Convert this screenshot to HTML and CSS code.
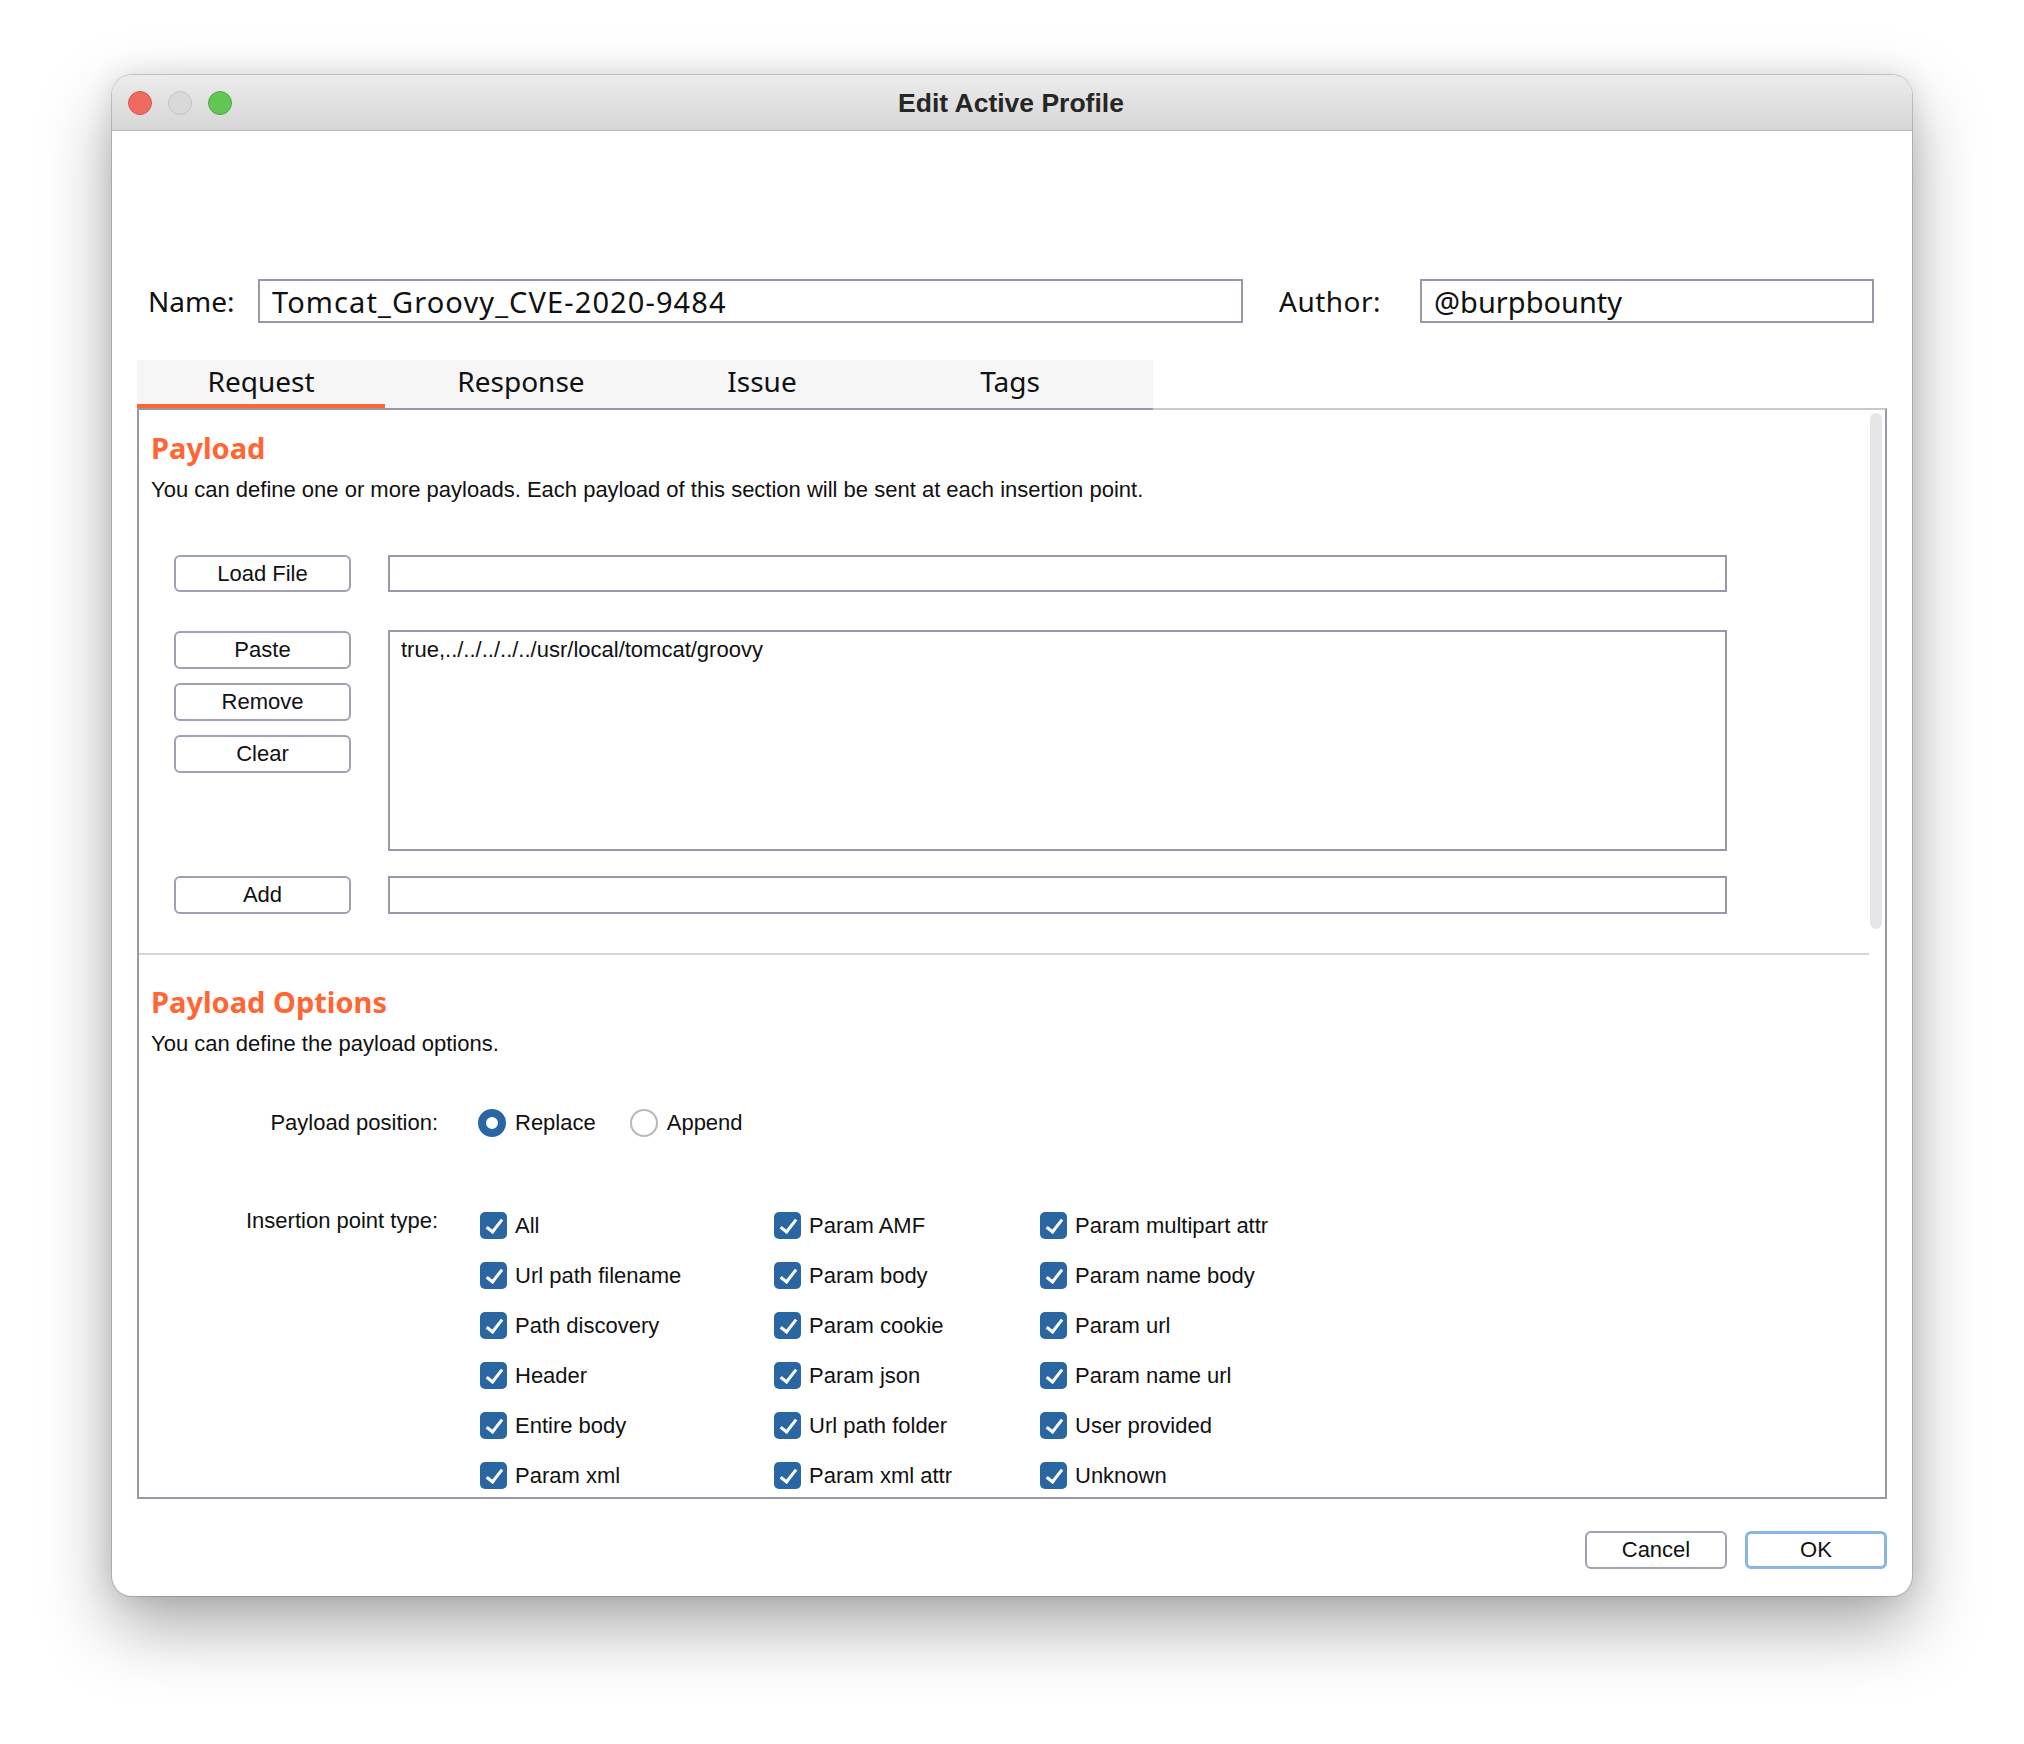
FILE: index.html
```html
<!DOCTYPE html>
<html>
<head>
<meta charset="utf-8">
<title>Edit Active Profile</title>
<link rel="stylesheet" href="styles.css">
</head>
<body>
<div class="window">
  <div class="titlebar">
    <div class="lights">
      <span class="light red"></span>
      <span class="light grey"></span>
      <span class="light green"></span>
    </div>
    <div class="title">Edit Active Profile</div>
    <div></div>
  </div>
  <div class="content">
    <div class="meta-row">
      <span class="meta-label name-label">Name:</span>
      <div class="field name-field">Tomcat_Groovy_CVE-2020-9484</div>
      <span class="meta-label author-label">Author:</span>
      <div class="field author-field">@burpbounty</div>
    </div>

    <div class="tabs">
      <div class="tab active">Request</div>
      <div class="tab">Response</div>
      <div class="tab">Issue</div>
      <div class="tab">Tags</div>
    </div>

    <div class="panel">
      <div class="scroll-thumb"></div>

      <section class="section">
        <h2 class="section-title">Payload</h2>
        <p class="section-desc">You can define one or more payloads. Each payload of this section will be sent at each insertion point.</p>

        <div class="prow row-file">
          <div class="btn">Load File</div>
          <div class="input"></div>
        </div>
        <div class="prow row-list">
          <div class="btn-stack">
            <div class="btn">Paste</div>
            <div class="btn">Remove</div>
            <div class="btn">Clear</div>
          </div>
          <div class="input list">true,../../../../../usr/local/tomcat/groovy</div>
        </div>
        <div class="prow row-add">
          <div class="btn btn-add">Add</div>
          <div class="input input-add"></div>
        </div>
      </section>

      <div class="divider"></div>

      <section class="section">
        <h2 class="section-title options-title">Payload Options</h2>
        <p class="section-desc">You can define the payload options.</p>

        <div class="opt-row pos-row">
          <div class="opt-label">Payload position:</div>
          <div class="radios">
            <span class="radio checked"></span><span class="radio-text">Replace</span>
            <span class="radio"></span><span class="radio-text">Append</span>
          </div>
        </div>

        <div class="opt-row ins-row">
          <div class="opt-label ins-label">Insertion point type:</div>
          <div class="checks">
            <div class="chk"><span class="box"></span>All</div>
            <div class="chk"><span class="box"></span>Param AMF</div>
            <div class="chk"><span class="box"></span>Param multipart attr</div>
            <div class="chk"><span class="box"></span>Url path filename</div>
            <div class="chk"><span class="box"></span>Param body</div>
            <div class="chk"><span class="box"></span>Param name body</div>
            <div class="chk"><span class="box"></span>Path discovery</div>
            <div class="chk"><span class="box"></span>Param cookie</div>
            <div class="chk"><span class="box"></span>Param url</div>
            <div class="chk"><span class="box"></span>Header</div>
            <div class="chk"><span class="box"></span>Param json</div>
            <div class="chk"><span class="box"></span>Param name url</div>
            <div class="chk"><span class="box"></span>Entire body</div>
            <div class="chk"><span class="box"></span>Url path folder</div>
            <div class="chk"><span class="box"></span>User provided</div>
            <div class="chk"><span class="box"></span>Param xml</div>
            <div class="chk"><span class="box"></span>Param xml attr</div>
            <div class="chk"><span class="box"></span>Unknown</div>
          </div>
        </div>
      </section>
    </div>

    <div class="footer">
      <div class="btn btn-footer">Cancel</div>
      <div class="btn btn-footer btn-default">OK</div>
    </div>
  </div>
</div>
</body>
</html>
```
FILE: styles.css
```css
* { box-sizing: border-box; }

html, body {
  margin: 0;
  padding: 0;
}

body {
  width: 2024px;
  height: 1744px;
  overflow: hidden;
  background: #ffffff;
  font-family: "Liberation Sans", Arial, sans-serif;
  color: #111111;
}

.window {
  margin: 75px 0 0 112px;
  width: 1800px;
  height: 1521px;
  background: #ffffff;
  border-radius: 20px;
  overflow: hidden;
  box-shadow: 0 0 0 1px rgba(0, 0, 0, 0.16),
              0 30px 70px rgba(0, 0, 0, 0.34),
              0 0 28px rgba(0, 0, 0, 0.10);
}

/* ---------- title bar ---------- */
.titlebar {
  height: 56px;
  display: grid;
  grid-template-columns: 1fr auto 1fr;
  align-items: center;
  background: linear-gradient(#ececec, #d6d6d6);
  border-bottom: 1px solid #b6b6b6;
}

.lights {
  display: flex;
  gap: 16px;
  padding-left: 16px;
}

.light {
  width: 24px;
  height: 24px;
  border-radius: 50%;
}

.red { background: #ee6b60; border: 1px solid #d4584d; }
.grey { background: #d9d9d9; border: 1px solid #c2c2c2; }
.green { background: #62c655; border: 1px solid #4fab43; }

.title {
  padding-top: 2px;
  padding-right: 2px;
  font-family: "Liberation Sans", Arial, sans-serif;
  font-weight: bold;
  font-size: 26.5px;
  color: #262626;
}

/* ---------- content ---------- */
.content {
  padding: 148px 25px 0 25px;
}

.meta-row {
  display: flex;
  align-items: center;
  height: 44px;
  padding-left: 11px;
  font-family: "Noto Sans", "Open Sans", sans-serif;
  font-size: 28px;
  color: #111;
}

.name-label { width: 110px; }
.author-label { margin-left: 36px; width: 141px; letter-spacing: 0.5px; }

.field {
  height: 44px;
  border: 2px solid #9a97a9;
  padding: 0 12px;
  display: flex;
  align-items: center;
  background: #fff;
  font-size: 29px;
}

.name-field { width: 985px; letter-spacing: 1.1px; }
.author-field { width: 454px; }

/* ---------- tabs ---------- */
.tabs {
  margin-top: 37px;
  width: 1016px;
  height: 50px;
  display: grid;
  grid-template-columns: 248px 272px 210px 1fr;
  background: #f6f6f6;
  border-bottom: 2px solid #9a97a9;
  position: relative;
  z-index: 1;
  margin-bottom: -2px;
  font-family: "Noto Sans", "Open Sans", sans-serif;
  font-size: 28px;
}

.tab {
  height: 48px;
  display: flex;
  align-items: center;
  justify-content: center;
  padding-bottom: 6px;
  color: #111;
}

.tab.active {
  border-bottom: 4px solid #ff6633;
  padding-bottom: 2px;
}

/* ---------- panel ---------- */
.panel {
  position: relative;
  height: 1091px;
  border: 2px solid #9a97a9;
  border-top-color: #c9c9cc;
  overflow: hidden;
}

.scroll-thumb {
  position: absolute;
  top: 3px;
  right: 3px;
  width: 12px;
  height: 516px;
  border-radius: 6px;
  background: #e6e6e6;
}

.section {
  padding-left: 12px;
}

.section-title {
  margin: 0;
  padding-top: 20px;
  font-family: "Noto Sans", "Open Sans", sans-serif;
  font-weight: bold;
  font-size: 29px;
  line-height: 36px;
  color: #ff6633;
}

.options-title {
  padding-top: 29px;
}

.section-desc {
  margin: 10px 0 0 0;
  font-size: 22px;
  line-height: 28px;
}

.prow {
  display: flex;
  align-items: flex-start;
  gap: 37px;
  margin-left: 23px;
}

.row-file { margin-top: 51px; }
.row-list { margin-top: 38px; }
.row-add { margin-top: 25px; }

.btn {
  width: 177px;
  height: 37px;
  border: 2px solid #a29fb1;
  border-radius: 6px;
  background: #ffffff;
  display: flex;
  align-items: center;
  justify-content: center;
  font-size: 22px;
  color: #111;
}

.btn-stack {
  display: flex;
  flex-direction: column;
  gap: 14px;
  padding-top: 1px;
}

.btn-stack .btn,
.btn-add { height: 38px; }

.input {
  width: 1339px;
  height: 37px;
  border: 2px solid #9a97a9;
  background: #fff;
}

.input-add { height: 38px; }

.list {
  height: 221px;
  padding: 4px 11px;
  font-size: 22px;
  line-height: 28px;
}

.divider {
  margin-top: 39px;
  width: 1730px;
  height: 2px;
  background: #d6d6d6;
}

/* ---------- options ---------- */
.opt-row {
  display: grid;
  grid-template-columns: 287px auto;
  column-gap: 40px;
  font-size: 22px;
  line-height: 28px;
}

.opt-label {
  text-align: right;
}

.pos-row { margin-top: 51px; }
.ins-row { margin-top: 74px; }

.ins-label { margin-top: -4px; }

.radios {
  display: flex;
  align-items: center;
}

.radio {
  width: 28px;
  height: 28px;
  border-radius: 50%;
  border: 2px solid #b9b9b9;
  background: #fff;
  margin-right: 9px;
}

.radio.checked {
  border: 8px solid #2a66a1;
  background: #ffffff;
}

.radio-text { margin-right: 34px; }

.checks {
  display: grid;
  grid-template-columns: 294px 266px auto;
  row-gap: 23px;
  padding-left: 2px;
  padding-top: 1px;
}

.chk {
  display: flex;
  align-items: center;
  height: 27px;
  white-space: nowrap;
}

.box {
  position: relative;
  width: 27px;
  height: 27px;
  border-radius: 5px;
  background: #2a66a1;
  margin-right: 8px;
  flex: none;
}

.box::after {
  content: "";
  position: absolute;
  left: 10px;
  top: 4px;
  width: 6px;
  height: 14px;
  border: solid #ffffff;
  border-width: 0 3px 3px 0;
  transform: rotate(38deg);
}

/* ---------- footer ---------- */
.footer {
  margin-top: 32px;
  display: flex;
  justify-content: flex-end;
  gap: 18px;
}

.btn-footer {
  width: 142px;
  height: 38px;
}

.btn-default {
  border: 3px solid #8ab5e5;
}
```
